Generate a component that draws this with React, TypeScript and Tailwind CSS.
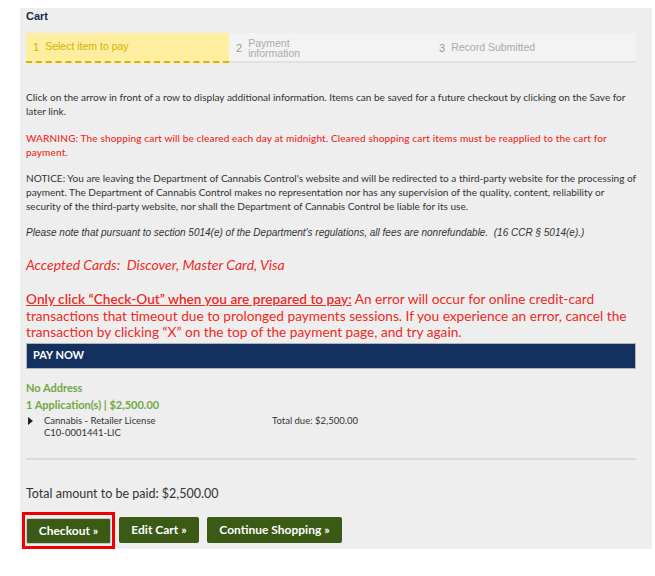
import React from 'react';

const BODY = "font-['Lato','Open_Sans',sans-serif]";
const ARIAL = "font-['Liberation_Sans',Arial,sans-serif]";

const steps = [
  { n: '1', label: 'Select item to pay', active: true },
  { n: '2', label: 'Payment information', active: false, wrap: true },
  { n: '3', label: 'Record Submitted', active: false },
];

const App: React.FC = () => {
  return (
    <div className="w-full h-[576px] bg-white">
      <div className={`ml-[20px] mt-[8px] w-[632px] bg-[#eeeeee] pl-[6px] pr-[16px] pt-[1px] ${BODY}`}>
        <h1 className={`text-[11px] leading-[14px] font-bold text-[#1c2a48] ${ARIAL}`}>Cart</h1>

        {/* step indicator */}
        <div className={`mt-[10px] flex w-[610px] h-[30px] bg-[#f3f3f3] border-b-2 border-[#e2e2e2] ${ARIAL}`}>
          {steps.map(s => (
            <div
              key={s.n}
              className={`w-[203px] h-[30px] flex items-center pl-[7px] ${s.active ? 'bg-[#fdeea0] border-b-2 border-dashed border-[#d9b300] -mb-[2px]' : ''}`}
            >
              <span className={`text-[11px] mr-[6px] ${s.active ? 'text-[#d6b200]' : 'text-[#9a9a9a]'}`}>{s.n}</span>
              {s.wrap ? (
                <span className="text-[10.5px] leading-[10px] text-[#ababab] w-[60px]">Payment information</span>
              ) : (
                <span className={`text-[10.5px] ${s.active ? 'text-[#d6b200]' : 'text-[#ababab]'}`}>{s.label}</span>
              )}
            </div>
          ))}
        </div>

        <p className="mt-[27px] text-[10.05px] leading-[14px] text-[#333]">
          Click on the arrow in front of a row to display additional information. Items can be saved for a future checkout by clicking on the Save for later link.
        </p>
        <p className="mt-[13px] text-[10.05px] leading-[14px] text-[#ee2a24] font-medium tracking-[0.12px]">
          WARNING: The shopping cart will be cleared each day at midnight. Cleared shopping cart items must be reapplied to the cart for payment.
        </p>
        <p className="mt-[12px] text-[10.05px] leading-[14px] text-[#333]">
          NOTICE: You are leaving the Department of Cannabis Control's website and will be redirected to a third-party website for the processing of payment. The Department of Cannabis Control makes no representation nor has any supervision of the quality, content, reliability or security of the third-party website, nor shall the Department of Cannabis Control be liable for its use.
        </p>
        <p className={`mt-[13px] text-[10px] leading-[14px] text-[#333] italic ${ARIAL}`}>
          Please note that pursuant to section 5014(e) of the Department's regulations, all fees are nonrefundable.&nbsp; (16 CCR § 5014(e).)
        </p>
        <p className="mt-[16px] text-[14px] leading-[18px] text-[#ee2a24] italic">
          Accepted Cards:&nbsp; Discover, Master Card, Visa
        </p>
        <p className="mt-[17px] w-[620px] text-[13.7px] leading-[16.5px] text-[#ee2a24]">
          <span className="underline font-semibold">Only click “Check-Out” when you are prepared to pay:</span> An error will occur for online credit-card transactions that timeout due to prolonged payments sessions. If you experience an error, cancel the transaction by clicking “X” on the top of the payment page, and try again.
        </p>

        <div className="mt-[2px] w-[610px] h-[26px] bg-[#14305e] border border-[#b5b5b5] flex items-center pl-[6px]">
          <span className="text-white text-[11px] font-bold">PAY NOW</span>
        </div>

        <div className="mt-[10px] text-[11px] leading-[17px] font-bold text-[#72a843]">
          <div>No Address</div>
          <div>1 Application(s) | $2,500.00</div>
        </div>

        <div className="mt-[2px] flex text-[9.5px] leading-[12px] text-[#333]">
          <div className="w-[18px] pt-[2px] pl-[2px]">
            <svg width="5" height="8" viewBox="0 0 5 8"><path d="M0 0 L5 4 L0 8 Z" fill="#222" /></svg>
          </div>
          <div className="w-[228px]">
            <div>Cannabis - Retailer License</div>
            <div>C10-0001441-LIC</div>
          </div>
          <div>Total due: $2,500.00</div>
        </div>

        <div className="mt-[19px] w-[610px] h-[2px] bg-[#dadada]" />

        <div className="mt-[26px] text-[12.5px] leading-[16px] text-[#333]">Total amount to be paid: $2,500.00</div>

        <div className="mt-[10px] flex items-center">
          <div className="-ml-[4px] border-[3px] border-[#ee0000] px-[1px] py-[2px]">
            <button className="w-[85px] h-[26px] bg-[#3a5a15] border border-[#c8c8c8] rounded-[2px] text-white text-[12px] font-bold">Checkout »</button>
          </div>
          <button className="ml-[4px] w-[80px] h-[26px] bg-[#3a5a15] rounded-[2px] text-white text-[12px] font-bold">Edit Cart »</button>
          <button className="ml-[8px] w-[135px] h-[26px] bg-[#3a5a15] rounded-[2px] text-white text-[12px] font-bold">Continue Shopping »</button>
        </div>
      </div>
    </div>
  );
};

export default App;
